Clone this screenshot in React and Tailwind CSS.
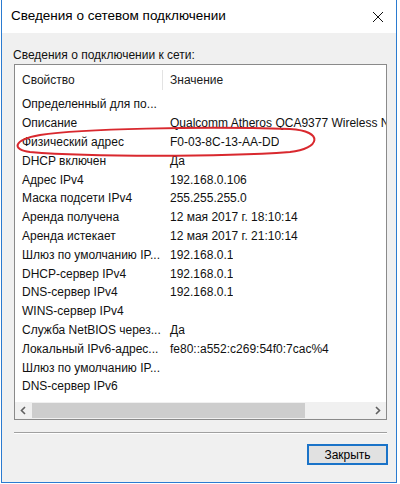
const rows = [
  ['Определенный для по...', ''],
  ['Описание', 'Qualcomm Atheros QCA9377 Wireless Network Adapter'],
  ['Физический адрес', 'F0-03-8C-13-AA-DD'],
  ['DHCP включен', 'Да'],
  ['Адрес IPv4', '192.168.0.106'],
  ['Маска подсети IPv4', '255.255.255.0'],
  ['Аренда получена', '12 мая 2017 г. 18:10:14'],
  ['Аренда истекает', '12 мая 2017 г. 21:10:14'],
  ['Шлюз по умолчанию IP...', '192.168.0.1'],
  ['DHCP-сервер IPv4', '192.168.0.1'],
  ['DNS-сервер IPv4', '192.168.0.1'],
  ['WINS-сервер IPv4', ''],
  ['Служба NetBIOS через...', 'Да'],
  ['Локальный IPv6-адрес...', 'fe80::a552:c269:54f0:7cac%4'],
  ['Шлюз по умолчанию IP...', ''],
  ['DNS-сервер IPv6', ''],
];

export default function App() {
  return (
    <div
      className="relative w-[400px] h-[484px] bg-white text-[#111] overflow-hidden"
      style={{ fontFamily: '"Liberation Sans", Arial, sans-serif' }}
    >
      <div className="ml-[1px] w-[396px] h-[483px] flex flex-col border-x border-b border-[#2b7bd0]">
        {/* title bar */}
        <div className="h-[33px] shrink-0 bg-white flex items-center justify-between pl-[9px] pr-[10px]">
          <span className="text-[13.5px] text-black">Сведения о сетевом подключении</span>
          <svg width="12" height="12" viewBox="0 0 12 12" className="mr-[2px]">
            <path d="M1 1 L11 11 M11 1 L1 11" stroke="#111" strokeWidth="1" fill="none" />
          </svg>
        </div>

        {/* body */}
        <div className="flex-1 bg-[#f0f0f0] flex flex-col px-[12px]">
          <p className="mt-[15px] text-[12px] leading-[14px] -ml-[1px]">Сведения о подключении к сети:</p>

          <div className="mt-[2px] w-[373px] h-[356px] border border-[#8a8a8a] bg-white flex flex-col overflow-hidden">
            {/* header */}
            <div className="h-[30px] shrink-0 flex items-center text-[12px] text-[#1a1a1a]">
              <div className="w-[147px] pl-[7px]">Свойство</div>
              <div className="w-px h-[20px] bg-[#e3e3e3]" />
              <div className="pl-[7px]">Значение</div>
            </div>
            {/* rows */}
            <div className="flex flex-col">
              {rows.map(([k, v], i) => (
                <div key={i} className="h-[18.8px] flex items-center text-[12px] whitespace-nowrap">
                  <div className="w-[148px] shrink-0 pl-[7px] overflow-hidden">{k}</div>
                  <div className="pl-[7px] overflow-hidden">{v}</div>
                </div>
              ))}
            </div>
            {/* horizontal scrollbar */}
            <div className="mt-auto h-[17px] shrink-0 bg-[#f0f0f0] flex items-center">
              <div className="w-[17px] h-full flex items-center justify-center">
                <svg width="7" height="9" viewBox="0 0 7 9">
                  <path d="M5 1 L1.5 4.5 L5 8" stroke="#606060" strokeWidth="1.6" fill="none" />
                </svg>
              </div>
              <div className="w-[273px] h-[15px] bg-[#cdcdcd]" />
              <div className="flex-1" />
              <div className="w-[17px] h-full flex items-center justify-center">
                <svg width="7" height="9" viewBox="0 0 7 9">
                  <path d="M2 1 L5.5 4.5 L2 8" stroke="#606060" strokeWidth="1.6" fill="none" />
                </svg>
              </div>
            </div>
          </div>

          {/* separator */}
          <div className="mt-[12px] w-[373px] h-px bg-[#a0a0a0]" />
          <div className="w-[373px] h-px bg-white" />

          <div className="mt-[10px] flex justify-end">
            <button
              type="button"
              className="w-[81px] h-[21px] mr-[-4px] border-2 border-[#1a73c8] bg-[#e1e1e1] text-[12px] text-black flex items-center justify-center"
            >
              Закрыть
            </button>
          </div>
        </div>
      </div>

      {/* red marker ellipse */}
      <svg className="absolute left-0 top-0 pointer-events-none" width="400" height="484" viewBox="0 0 400 484">
        <path
          d="M40 135 C 80 129, 200 126, 290 129 C 325 131, 320 149, 290 152 C 220 157, 90 157, 30 152 C 12 150, 12 140, 40 135"
          stroke="#d9282e"
          strokeWidth="2"
          fill="none"
        />
      </svg>
    </div>
  );
}
